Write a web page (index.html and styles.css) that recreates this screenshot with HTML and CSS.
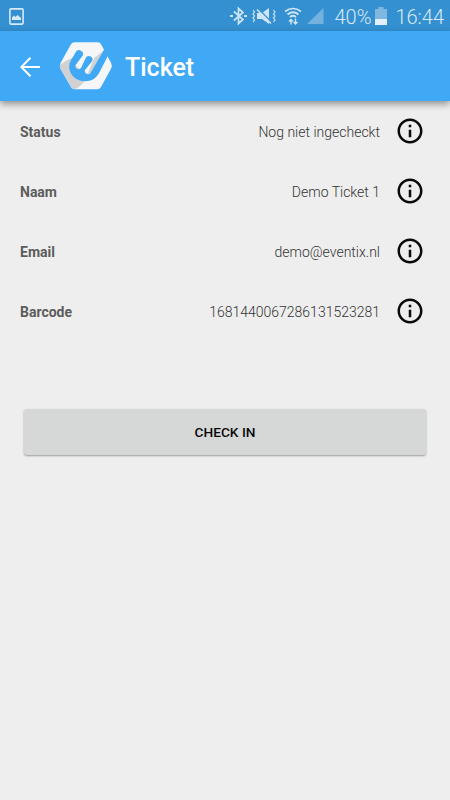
FILE: index.html
```html
<!DOCTYPE html>
<html lang="nl">
<head>
  <meta charset="UTF-8" />
  <meta name="viewport" content="width=device-width, initial-scale=1" />
  <title>Ticket</title>
  <link rel="stylesheet" href="styles.css">
</head>
<body>

  <!-- Status bar -->
  <div class="statusbar">
    <svg class="picture" width="15" height="17" viewBox="0 0 15 17">
      <rect x="0.9" y="0.9" width="13.2" height="15.2" rx="1" fill="none" stroke="#d6e9f5" stroke-width="1.6" />
      <path d="M3 12V9.5l2-2 1.5 1.4L8.5 7l3.5 3v2z" fill="#d6e9f5" />
    </svg>
    <svg width="104" height="20" viewBox="0 0 104 20" fill="none" stroke="#cfe5f5">
      <!-- bluetooth -->
      <path d="M4 5.5l9 8-4.500 4V2.500l4.500 4-9 8" stroke-width="1.7" />
      <path d="M0 10h3M14 10h3" stroke-width="2.200" />
      <!-- sound off -->
      <path d="M27 7h5l7-5v16l-7-5h-5z" fill="#cfe5f5" stroke="none" />
      <path d="M28 2.500l15 15" stroke="#3490d0" stroke-width="1.200" />
      <path d="M27 3.500l14 14" stroke-width="1.500" />
      <path d="M23 4l1.500 2-1.500 2 1.500 2-1.500 2 1.500 2-1.500 2M43.500 4l1.500 2-1.500 2 1.500 2-1.500 2 1.500 2-1.500 2" stroke-width="1.200" />
      <!-- wifi -->
      <path d="M55 5.500q8-6 16 0M57.500 8.500q5.500-4.500 11 0M60 11q3-2.500 6 0" stroke-width="1.700" />
      <path d="M61 18.500v-5M59 15.500l2-2 2 2M65.500 12.500v5.500M63.500 16l2 2 2-2" stroke-width="1.400" />
      <!-- signal -->
      <path d="M93.500 2v16H77z" fill="#73b2de" stroke="none" />
    </svg>
    <span class="percent">40%</span>
    <svg class="battery" width="12" height="18" viewBox="0 0 12 18">
      <path d="M0 2h3.500V0h5v2H12v16H0z" fill="#7eb8e1" />
      <path d="M0 12h12v6H0z" fill="#e3f0f9" />
    </svg>
    <span class="time">16:44</span>
  </div>

  <!-- Header -->
  <header class="header">
    <svg class="back" width="20" height="20" viewBox="0 0 20 20" fill="none" stroke="#fff" stroke-width="2">
      <path d="M20 10H1.500M10.500 0.700L1.300 10l9.200 9.300" />
    </svg>
    <svg class="logo" width="54" height="50" viewBox="28 23 162 150">
      <path d="M76 27H144Q151 27 155 34L184 88Q189 97 184 106L154 161Q150 168 143 168H76Q68 168 64 161L33 107Q28 97 33 88L63 34Q67 27 76 27Z" fill="#f5f6f7" />
      <path d="M31 94Q50 80 82 68L105 144Q93 158 78 168H76Q68 168 64 161L33 107Q29 99 31 94Z" fill="#d0d1d3" />
      <path d="M78 95L98 68L112 76L92 112Z" fill="#f5f6f7" />
      <path d="M164 50L134 74L113 124L124 118Z" fill="#d0d1d3" />
      <path d="M164 48L123 118A9.500 9.500 0 0 1 106 110L128 83A11 11 0 0 0 107 76L95 102A9 9 0 0 1 78 94L99 67A11.500 11.500 0 0 0 77 58L64 81C48 109 70 144 106 144C130 144 142 132 151 114L174 69L190 38Z" fill="#3fa9f5" />
    </svg>
    <h1>Ticket</h1>
  </header>

  <!-- Ticket details -->
  <main>
    <div class="row">
      <b>Status</b>
      <span>Nog niet ingecheckt</span>
      <svg class="info" viewBox="0 0 24 24"><path d="M11 17h2v-6h-2v6zm1-15C6.480 2 2 6.480 2 12s4.480 10 10 10 10-4.480 10-10S17.520 2 12 2zm0 18c-4.410 0-8-3.590-8-8s3.590-8 8-8 8 3.590 8 8-3.590 8-8 8zM11 9h2V7h-2v2z" /></svg>
    </div>
    <div class="row">
      <b>Naam</b>
      <span>Demo Ticket 1</span>
      <svg class="info" viewBox="0 0 24 24"><path d="M11 17h2v-6h-2v6zm1-15C6.480 2 2 6.480 2 12s4.480 10 10 10 10-4.480 10-10S17.520 2 12 2zm0 18c-4.410 0-8-3.590-8-8s3.590-8 8-8 8 3.590 8 8-3.590 8-8 8zM11 9h2V7h-2v2z" /></svg>
    </div>
    <div class="row">
      <b>Email</b>
      <span>demo@eventix.nl</span>
      <svg class="info" viewBox="0 0 24 24"><path d="M11 17h2v-6h-2v6zm1-15C6.480 2 2 6.480 2 12s4.480 10 10 10 10-4.480 10-10S17.520 2 12 2zm0 18c-4.410 0-8-3.590-8-8s3.590-8 8-8 8 3.590 8 8-3.590 8-8 8zM11 9h2V7h-2v2z" /></svg>
    </div>
    <div class="row">
      <b>Barcode</b>
      <span>1681440067286131523281</span>
      <svg class="info" viewBox="0 0 24 24"><path d="M11 17h2v-6h-2v6zm1-15C6.480 2 2 6.480 2 12s4.480 10 10 10 10-4.480 10-10S17.520 2 12 2zm0 18c-4.410 0-8-3.590-8-8s3.590-8 8-8 8 3.590 8 8-3.590 8-8 8zM11 9h2V7h-2v2z" /></svg>
    </div>
    <button class="checkin">CHECK IN</button>
  </main>

</body>
</html>
```
FILE: styles.css
```css
* {
  box-sizing: border-box;
}

body {
  margin: 0;
  height: 100vh;
  background: #eeeeee;
  color: #5c5c5c;
  font-family: Roboto, sans-serif;
  overflow: hidden;
}

.statusbar {
  display: flex;
  align-items: center;
  height: 31px;
  padding: 1px 6px 0 9px;
  background: #3490d0;
  color: #d9eaf6;
  font-size: 20px;
  font-weight: 300;
}

.picture {
  margin-right: auto;
}

.percent {
  margin-left: 0;
}

.percent,
.time {
  padding-top: 2px;
}

.battery {
  margin: 0 8px 0 4px;
}

.header {
  display: flex;
  align-items: center;
  height: 70px;
  padding-left: 20px;
  background: #3fa9f5;
  color: #fff;
  box-shadow: 0 3px 7px rgba(0, 0, 0, 0.4);
}

.back {
  margin-top: 1px;
}

.logo {
  margin-left: 19px;
}

h1 {
  margin: 2px 0 0 12px;
  font-size: 25px;
  font-weight: 500;
}

.row {
  display: flex;
  align-items: center;
  height: 60px;
  padding: 0 25px 0 20px;
  font-size: 14px;
}

.row b,
.row span {
  padding-top: 2px;
}

.row span {
  margin-left: auto;
  color: #333;
  font-weight: 300;
}

.info {
  width: 30px;
  height: 30px;
  margin-left: 15px;
  fill: #0a0a0a;
}

.checkin {
  display: block;
  width: 402px;
  height: 46px;
  margin: 68px auto 0;
  padding: 0;
  border: none;
  border-radius: 3px;
  background: #d6d8d7;
  box-shadow: 0 1px 2px rgba(0, 0, 0, 0.35);
  color: #0a0a0a;
  font-family: inherit;
  font-size: 13.7px;
  font-weight: 500;
}
```
